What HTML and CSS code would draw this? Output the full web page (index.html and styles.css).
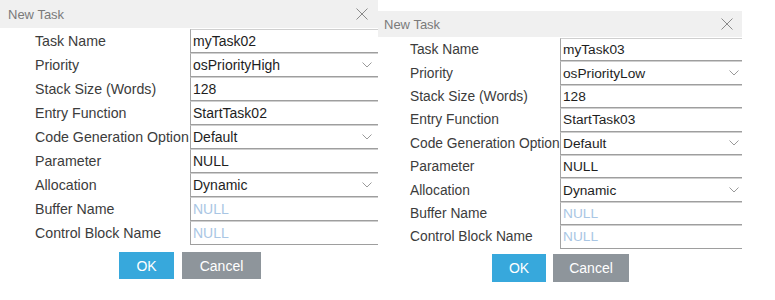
FILE: index.html
```html
<!DOCTYPE html>
<html>
<head>
<meta charset="utf-8">
<link rel="stylesheet" href="styles.css">
</head>
<body>
<div class="dialog dialog--a">
  <div class="titlebar">
    <span class="title">New Task</span>
    <svg class="close" width="12" height="12" viewBox="0 0 12 12"><path d="M0.5 0.5L11.5 11.5M11.5 0.5L0.5 11.5" stroke="#8a8a8a" stroke-width="1" fill="none"/></svg>
  </div>
  <div class="form">
    <div class="row"><span class="label">Task Name</span><span class="field">myTask02</span></div>
    <div class="row"><span class="label">Priority</span><span class="field select">osPriorityHigh<svg class="chev" width="10" height="6" viewBox="0 0 10 6"><path d="M0.5 0.5L5 5L9.5 0.5" stroke="#9a9a9a" fill="none"/></svg></span></div>
    <div class="row"><span class="label">Stack Size (Words)</span><span class="field">128</span></div>
    <div class="row"><span class="label">Entry Function</span><span class="field">StartTask02</span></div>
    <div class="row"><span class="label">Code Generation Option</span><span class="field select">Default<svg class="chev" width="10" height="6" viewBox="0 0 10 6"><path d="M0.5 0.5L5 5L9.5 0.5" stroke="#9a9a9a" fill="none"/></svg></span></div>
    <div class="row"><span class="label">Parameter</span><span class="field">NULL</span></div>
    <div class="row"><span class="label">Allocation</span><span class="field select">Dynamic<svg class="chev" width="10" height="6" viewBox="0 0 10 6"><path d="M0.5 0.5L5 5L9.5 0.5" stroke="#9a9a9a" fill="none"/></svg></span></div>
    <div class="row"><span class="label">Buffer Name</span><span class="field placeholder">NULL</span></div>
    <div class="row"><span class="label">Control Block Name</span><span class="field placeholder">NULL</span></div>
  </div>
  <div class="buttons">
    <button class="btn btn--ok">OK</button>
    <button class="btn btn--cancel">Cancel</button>
  </div>
</div>
<div class="dialog dialog--b">
  <div class="titlebar">
    <span class="title">New Task</span>
    <svg class="close" width="12" height="12" viewBox="0 0 12 12"><path d="M0.5 0.5L11.5 11.5M11.5 0.5L0.5 11.5" stroke="#8a8a8a" stroke-width="1" fill="none"/></svg>
  </div>
  <div class="form">
    <div class="row"><span class="label">Task Name</span><span class="field">myTask03</span></div>
    <div class="row"><span class="label">Priority</span><span class="field select">osPriorityLow<svg class="chev" width="10" height="6" viewBox="0 0 10 6"><path d="M0.5 0.5L5 5L9.5 0.5" stroke="#9a9a9a" fill="none"/></svg></span></div>
    <div class="row"><span class="label">Stack Size (Words)</span><span class="field">128</span></div>
    <div class="row"><span class="label">Entry Function</span><span class="field">StartTask03</span></div>
    <div class="row"><span class="label">Code Generation Option</span><span class="field select">Default<svg class="chev" width="10" height="6" viewBox="0 0 10 6"><path d="M0.5 0.5L5 5L9.5 0.5" stroke="#9a9a9a" fill="none"/></svg></span></div>
    <div class="row"><span class="label">Parameter</span><span class="field">NULL</span></div>
    <div class="row"><span class="label">Allocation</span><span class="field select">Dynamic<svg class="chev" width="10" height="6" viewBox="0 0 10 6"><path d="M0.5 0.5L5 5L9.5 0.5" stroke="#9a9a9a" fill="none"/></svg></span></div>
    <div class="row"><span class="label">Buffer Name</span><span class="field placeholder">NULL</span></div>
    <div class="row"><span class="label">Control Block Name</span><span class="field placeholder">NULL</span></div>
  </div>
  <div class="buttons">
    <button class="btn btn--ok">OK</button>
    <button class="btn btn--cancel">Cancel</button>
  </div>
</div>
</body>
</html>
```
FILE: styles.css
```css
html, body {
  margin: 0;
  padding: 0;
  background: #ffffff;
}
body {
  display: flex;
  align-items: flex-start;
  width: 775px;
  height: 300px;
  overflow: hidden;
  font-family: "Liberation Sans", Arial, sans-serif;
}
.dialog {
  background: #ffffff;
  overflow: hidden;
  flex: none;
}
.dialog--a {
  width: 378px;
  font-size: 14.2px;
}
.dialog--b {
  width: 364px;
  margin-top: 11px;
  font-size: 13.8px;
}
.titlebar {
  display: flex;
  align-items: center;
  justify-content: space-between;
  background: #f0f0f0;
  color: #7a7a7a;
  font-size: 13px;
}
.dialog--a .titlebar {
  height: 28px;
  padding: 0 10px 0 8px;
}
.dialog--b .titlebar {
  height: 26px;
  padding: 0 9px 0 6px;
}
.close {
  display: block;
}
.form {
  display: flex;
  flex-direction: column;
}
.dialog--a .form {
  padding: 1px 0 0 35px;
}
.dialog--b .form {
  padding: 1px 0 0 32px;
}
.row {
  display: grid;
  align-items: center;
}
.dialog--a .row {
  grid-template-columns: 155px 1fr;
  height: 24px;
}
.dialog--b .row {
  grid-template-columns: 150px 1fr;
  height: 23.4px;
}
.label {
  color: #3c3c3c;
  white-space: nowrap;
}
.field {
  height: 100%;
  box-sizing: border-box;
  display: flex;
  align-items: center;
  justify-content: space-between;
  padding-left: 2px;
  border-left: 1px solid #a4a4a4;
  border-top: 1px solid #cfcfcf;
  border-bottom: 1px solid #9e9e9e;
  color: #1e1e1e;
  font-size: 14px;
}
.dialog--b .field {
  font-size: 13.7px;
}
.dialog--a .select {
  padding-right: 6px;
}
.dialog--b .select {
  padding-right: 3px;
}
.placeholder {
  color: #a9c6e4;
}
.chev {
  display: block;
}
.buttons {
  display: flex;
}
.dialog--a .buttons {
  padding: 7px 0 0 119px;
  gap: 8px;
}
.dialog--b .buttons {
  padding: 5px 0 0 114px;
  gap: 7px;
}
.btn {
  border: none;
  margin: 0;
  height: 27px;
  color: #ffffff;
  font-family: "Liberation Sans", Arial, sans-serif;
  font-size: 14px;
  padding: 0;
}
.dialog--b .btn {
  height: 28px;
}
.btn--ok {
  background: #37a8dc;
}
.btn--cancel {
  background: #8e959b;
}
.dialog--a .btn--ok { width: 55px; }
.dialog--a .btn--cancel { width: 79px; }
.dialog--b .btn--ok { width: 54px; }
.dialog--b .btn--cancel { width: 76px; }
```
